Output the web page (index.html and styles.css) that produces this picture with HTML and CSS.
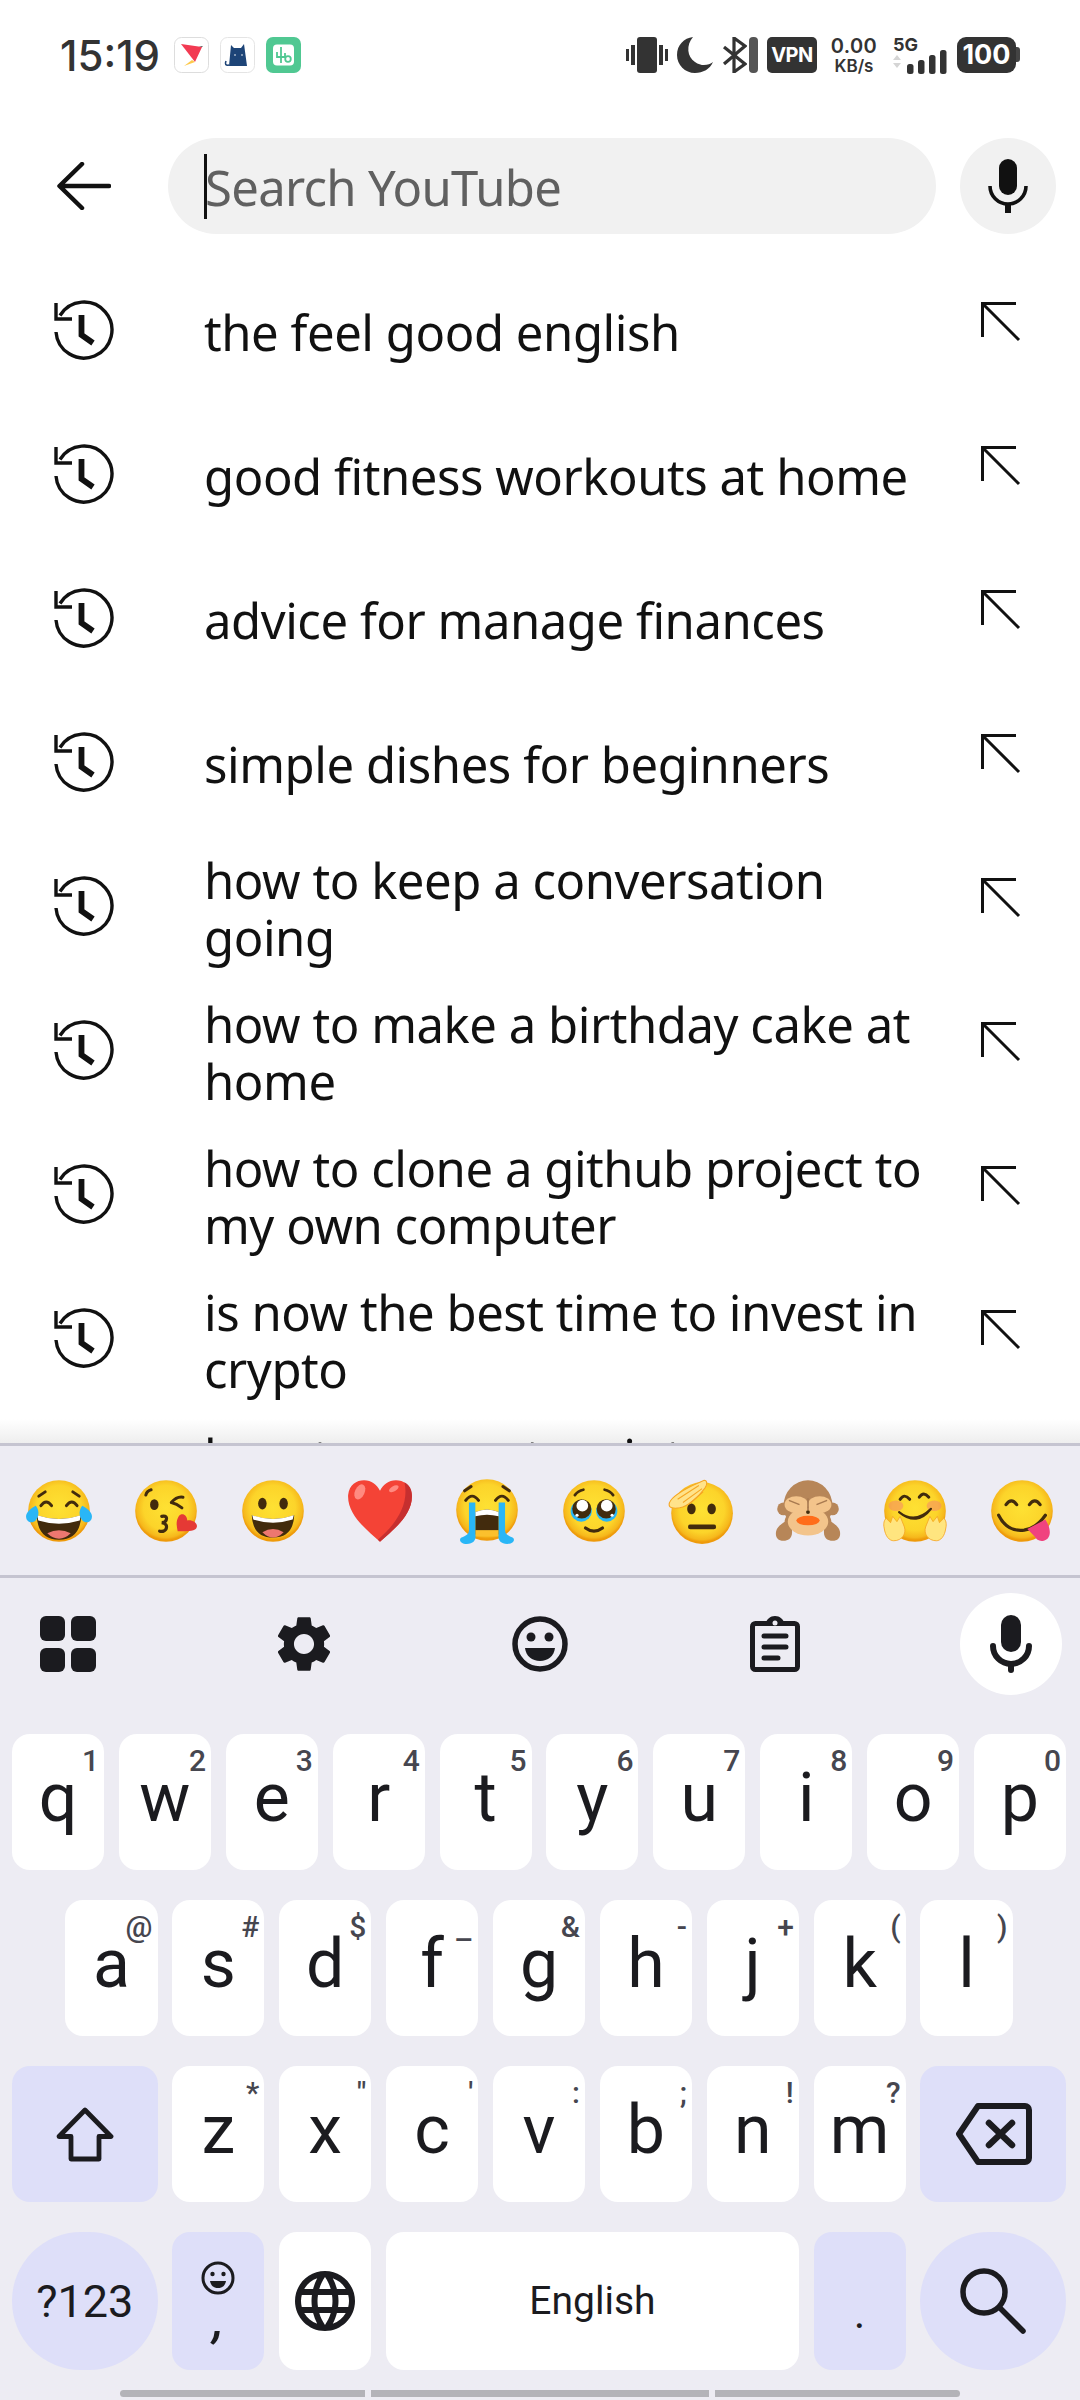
FILE: index.html
```html
<!DOCTYPE html>
<html lang="en">

<head>
    <meta charset="UTF-8">
    <meta name="viewport" content="width=device-width, initial-scale=1.0">
    <title>Search YouTube</title>
    <link rel="stylesheet" href="styles.css">
</head>

<body>

    <!-- shared icons -->
    <svg class="sprite" aria-hidden="true">
        <defs>
            <radialGradient id="face" cx="50%" cy="45%" r="52%">
                <stop offset="0%" stop-color="#fee133"/>
                <stop offset="70%" stop-color="#fcd42a"/>
                <stop offset="92%" stop-color="#f6b81c"/>
                <stop offset="100%" stop-color="#ee9a0a"/>
            </radialGradient>
            <symbol id="i-history" viewBox="0 0 60 60">
                <path d="M6 15.5A28 28 0 1 1 2 32" fill="none" stroke="#111" stroke-width="3.4"/>
                <path d="M2 3V19H18" fill="none" stroke="#111" stroke-width="3.4"/>
                <path d="M27.5 15V35L39 43" fill="none" stroke="#111" stroke-width="5.8"/>
            </symbol>
            <symbol id="i-fill" viewBox="0 0 40 40">
                <path d="M1.5 35V1.5H35M2 2L38 38" fill="none" stroke="#111" stroke-width="3"/>
            </symbol>
        </defs>
    </svg>

    <div class="page">

        <div class="status-bar">
            <div class="status-left">
                <span class="clock">15:19</span>
                <svg class="notif" viewBox="0 0 35 36">
                    <rect x=".5" y=".5" width="34" height="35" rx="7" fill="#fff" stroke="#ddd"/>
                    <path d="M7 7L28 10L21 25Z" fill="#f23a52"/>
                    <path d="M25 10L29 9L28 10Z" fill="#222"/>
                    <path d="M18 23L21 25L10 29Z" fill="#fdc94c"/>
                </svg>
                <svg class="notif" viewBox="0 0 35 36">
                    <rect x=".5" y=".5" width="34" height="35" rx="7" fill="#fff" stroke="#e4e4e4"/>
                    <path d="M11 8L14 11H21L24 7L27 29H9Z" fill="#1d4477"/>
                    <path d="M9 28Q4 29 6 24" fill="none" stroke="#1d4477" stroke-width="1.6"/>
                    <circle cx="15" cy="18" r=".8" fill="#fff"/>
                    <circle cx="22" cy="18" r=".8" fill="#fff"/>
                </svg>
                <svg class="notif" viewBox="0 0 35 36">
                    <rect width="35" height="36" rx="7" fill="#50c892"/>
                    <rect x="7" y="7.500" width="21" height="21" rx="4" fill="#fff"/>
                    <path d="M15 10V26M11 15V20H19V16" fill="none" stroke="#50c892" stroke-width="1.800"/>
                    <circle cx="22" cy="22" r="2.800" fill="none" stroke="#50c892" stroke-width="1.800"/>
                </svg>
            </div>
            <div class="status-right">
                <svg class="st-vibrate" viewBox="0 0 42 36" fill="#333">
                    <rect x="0" y="12" width="3" height="12"/>
                    <rect x="5" y="8" width="4" height="20"/>
                    <rect x="11" y="0" width="20" height="36" rx="3"/>
                    <rect x="33" y="8" width="4" height="20"/>
                    <rect x="39" y="12" width="3" height="12"/>
                </svg>
                <svg class="st-moon" viewBox="0 0 36 36">
                    <path d="M16 0C9 8 10 20 18 25C25 30 32 28 36 25C33 32 26 36 18 36C8 36 0 28 0 18C0 8 7 1 16 0Z" fill="#333"/>
                </svg>
                <svg class="st-bt" viewBox="0 0 25 36">
                    <path d="M2 10L23 27L12 35V1L23 9L2 27" fill="none" stroke="#333" stroke-width="3.200"/>
                </svg>
                <span class="st-bt-bar"></span>
                <span class="st-vpn">VPN</span>
                <div class="st-speed">
                    <span class="speed-num">0.00</span>
                    <span class="speed-unit">KB/s</span>
                </div>
                <div class="st-net">
                    <span class="net-type">5G</span>
                    <svg class="net-bars" viewBox="0 0 54 24">
                        <path d="M0 10L4 5L8 10ZM0 13H8L4 18Z" fill="#d5d5d5"/>
                        <rect x="14" y="14" width="6.500" height="10" rx="2.500" fill="#333"/>
                        <rect x="25" y="10" width="6.500" height="14" rx="2.500" fill="#333"/>
                        <rect x="36" y="5" width="6.500" height="19" rx="2.500" fill="#333"/>
                        <rect x="47" y="0" width="6.500" height="24" rx="2.500" fill="#333"/>
                    </svg>
                </div>
                <div class="st-battery"><span>100</span></div>
            </div>
        </div>

        <div class="search-head">
            <div class="back-col">
                <svg class="back-icon" viewBox="0 0 54 48">
                    <path d="M52 24H3M25 2L2.500 24L25 46" fill="none" stroke="#111" stroke-width="4.500" stroke-linecap="round" stroke-linejoin="round"/>
                </svg>
            </div>
            <div class="search-box">
                <span class="caret"></span>
                <span class="placeholder">Search YouTube</span>
            </div>
            <div class="voice-btn">
                <svg class="voice-icon" viewBox="0 0 40 54">
                    <rect x="11" y="0" width="18" height="36" rx="9" fill="#111"/>
                    <path d="M2 27a18 18 0 0 0 36 0" fill="none" stroke="#111" stroke-width="3.600"/>
                    <rect x="17" y="44" width="6" height="10" fill="#111"/>
                </svg>
            </div>
        </div>

        <div class="results">
            <div class="result">
                <svg class="hist-icon"><use href="#i-history"/></svg>
                <span class="result-text">the feel good english</span>
                <svg class="fill-icon"><use href="#i-fill"/></svg>
            </div>
            <div class="result">
                <svg class="hist-icon"><use href="#i-history"/></svg>
                <span class="result-text">good fitness workouts at home</span>
                <svg class="fill-icon"><use href="#i-fill"/></svg>
            </div>
            <div class="result">
                <svg class="hist-icon"><use href="#i-history"/></svg>
                <span class="result-text">advice for manage finances</span>
                <svg class="fill-icon"><use href="#i-fill"/></svg>
            </div>
            <div class="result">
                <svg class="hist-icon"><use href="#i-history"/></svg>
                <span class="result-text">simple dishes for beginners</span>
                <svg class="fill-icon"><use href="#i-fill"/></svg>
            </div>
            <div class="result">
                <svg class="hist-icon"><use href="#i-history"/></svg>
                <span class="result-text">how to keep a conversation going</span>
                <svg class="fill-icon"><use href="#i-fill"/></svg>
            </div>
            <div class="result">
                <svg class="hist-icon"><use href="#i-history"/></svg>
                <span class="result-text">how to make a birthday cake at home</span>
                <svg class="fill-icon"><use href="#i-fill"/></svg>
            </div>
            <div class="result">
                <svg class="hist-icon"><use href="#i-history"/></svg>
                <span class="result-text">how to clone a github project to my own computer</span>
                <svg class="fill-icon"><use href="#i-fill"/></svg>
            </div>
            <div class="result">
                <svg class="hist-icon"><use href="#i-history"/></svg>
                <span class="result-text">is now the best time to invest in crypto</span>
                <svg class="fill-icon"><use href="#i-fill"/></svg>
            </div>
            <div class="result">
                <svg class="hist-icon"><use href="#i-history"/></svg>
                <span class="result-text">how to convert a pint measurement</span>
                <svg class="fill-icon"><use href="#i-fill"/></svg>
            </div>
        </div>

        <div class="keyboard">

            <div class="emoji-strip">
                <div class="emoji-cell">
                    <svg class="emoji" viewBox="0 0 64 64">
                        <circle cx="32" cy="32" r="29" fill="url(#face)"/>
                        <path d="M15 27q5-7 10 0M39 27q5-7 10 0M13 18l6-4M51 18l-6-4" fill="none" stroke="#422b0d" stroke-width="2.800" stroke-linecap="round"/>
                        <path d="M11 36q21 7 42 0q-1 23-21 23T11 36Z" fill="#422b0d"/>
                        <path d="M11.500 36q20.500 7 41 0l-1 5q-19.500 6-39 0Z" fill="#fff"/>
                        <path d="M21 53q11-6 22 0q-5 5-11 5t-11-5Z" fill="#ed7770"/>
                        <path d="M10 27C13 30 14 36 10 41C7 44 1 43 1 37C1 33 6 29 10 27Z" fill="#29b6f6"/>
                        <path d="M54 27C51 30 50 36 54 41C57 44 63 43 63 37C63 33 58 29 54 27Z" fill="#29b6f6"/>
                    </svg>
                </div>
                <div class="emoji-cell">
                    <svg class="emoji" viewBox="0 0 64 64">
                        <circle cx="32" cy="32" r="29" fill="url(#face)"/>
                        <ellipse cx="21" cy="26" rx="4" ry="5" fill="#422b0d"/>
                        <path d="M13 17q1-4 5-5M37 24q5-6 11-5M37 24q5 1 10 5" fill="none" stroke="#422b0d" stroke-width="2.800" stroke-linecap="round"/>
                        <path d="M28 37q6-1 4 4q-1 2-4 2q6 1 4 6q-2 3-6 2" fill="none" stroke="#422b0d" stroke-width="3" stroke-linecap="round"/>
                        <path d="M43 51C42 46 41 42 44 37C47 33 52 36 52 41C56 40 62 43 61 47C60 51 54 51 43 51Z" fill="#e53935"/>
                    </svg>
                </div>
                <div class="emoji-cell">
                    <svg class="emoji" viewBox="0 0 64 64">
                        <circle cx="32" cy="32" r="29" fill="url(#face)"/>
                        <ellipse cx="22" cy="25" rx="4" ry="5.500" fill="#422b0d"/>
                        <ellipse cx="42" cy="25" rx="4" ry="5.500" fill="#422b0d"/>
                        <path d="M12 36q20 7 40 0q-1 21-20 21T12 36Z" fill="#422b0d"/>
                        <path d="M12.500 36q19.500 7 39 0l-1 4q-18.500 6-37 0Z" fill="#fff"/>
                        <path d="M22 52q10-6 20 0q-5 5-10 5t-10-5Z" fill="#ed7770"/>
                    </svg>
                </div>
                <div class="emoji-cell">
                    <svg class="emoji" viewBox="0 0 64 64">
                        <path d="M32 61C20 50 1 36 2 17C3 7 10 3 17 3C24 3 29 7 32 13C35 7 40 3 47 3C54 3 61 7 62 17C63 36 44 50 32 61Z" fill="#f44336"/>
                        <path d="M55 5C60 8 62 12 62 17C63 36 44 50 32 61L30 59C45 46 60 28 55 5Z" fill="#c62f2f"/>
                        <ellipse cx="13" cy="14" rx="4.500" ry="7.500" transform="rotate(25 13 14)" fill="#ff8a80"/>
                        <ellipse cx="45" cy="11" rx="5" ry="2.500" transform="rotate(-30 45 11)" fill="#ff8a80"/>
                    </svg>
                </div>
                <div class="emoji-cell">
                    <svg class="emoji" viewBox="0 0 64 64">
                        <circle cx="32" cy="31" r="29" fill="url(#face)"/>
                        <path d="M12 22q6-8 12 0M40 22q6-8 12 0M11 13l6-4M53 13l-6-4" fill="none" stroke="#422b0d" stroke-width="2.800" stroke-linecap="round"/>
                        <path d="M21 33q11-5 22 0V54H21Z" fill="#422b0d"/>
                        <path d="M21 33q11-5 22 0v4q-11-3-22 0Z" fill="#fff"/>
                        <path d="M21 50H43V56H21Z" fill="#fbc02d"/>
                        <path d="M15 24H21V54C22 58 20 63 13 63C7 63 5 59 8 57C12 55 15 54 15 50Z" fill="#29b6f6"/>
                        <path d="M49 24H43V54C42 58 44 63 51 63C57 63 59 59 56 57C52 55 49 54 49 50Z" fill="#29b6f6"/>
                    </svg>
                </div>
                <div class="emoji-cell">
                    <svg class="emoji" viewBox="0 0 64 64">
                        <circle cx="32" cy="32" r="29" fill="url(#face)"/>
                        <path d="M14 17q3-4 8-5M50 17q-3-4-8-5" fill="none" stroke="#422b0d" stroke-width="2.600" stroke-linecap="round"/>
                        <circle cx="20" cy="32" r="10" fill="#29b6f6"/>
                        <circle cx="44" cy="32" r="10" fill="#29b6f6"/>
                        <circle cx="20.500" cy="30" r="9" fill="#422b0d"/>
                        <circle cx="43.500" cy="30" r="9" fill="#422b0d"/>
                        <circle cx="21" cy="27" r="5.500" fill="#fff"/>
                        <circle cx="44" cy="27" r="5.500" fill="#fff"/>
                        <circle cx="16" cy="36" r="1.500" fill="#fff"/>
                        <circle cx="49" cy="36" r="1.500" fill="#fff"/>
                        <path d="M24 48q8 6 16 0" fill="none" stroke="#422b0d" stroke-width="3" stroke-linecap="round"/>
                    </svg>
                </div>
                <div class="emoji-cell">
                    <svg class="emoji" viewBox="0 0 64 64">
                        <circle cx="33" cy="34" r="29" fill="url(#face)"/>
                        <ellipse cx="23" cy="30" rx="4" ry="5" fill="#422b0d"/>
                        <ellipse cx="42" cy="30" rx="4" ry="5" fill="#422b0d"/>
                        <path d="M22 47H44" stroke="#422b0d" stroke-width="4.500" stroke-linecap="round"/>
                        <path d="M2 26C2 20 12 14 24 8L35 3C38 3 38 7 36 10C30 18 22 27 12 29C6 30 2 29 2 26Z" fill="#ffe38a" stroke="#f6a623" stroke-width="1"/>
                        <path d="M10 21L30 8M15 24L33 11M21 25L34 14" stroke="#f6a623" stroke-width="1" fill="none"/>
                    </svg>
                </div>
                <div class="emoji-cell">
                    <svg class="emoji" viewBox="0 0 64 64">
                        <circle cx="9" cy="30" r="6" fill="#b78658"/>
                        <circle cx="55" cy="30" r="6" fill="#b78658"/>
                        <ellipse cx="32" cy="27" rx="23" ry="24" fill="#b78658"/>
                        <path d="M10 42C10 38 13 34 17 34V52C17 58 13 60 9 60C3 60 1 56 2 51C3 47 7 44 10 42Z" fill="#b78658"/>
                        <path d="M54 42C54 38 51 34 47 34V52C47 58 51 60 55 60C61 60 63 56 62 51C61 47 57 44 54 42Z" fill="#b78658"/>
                        <ellipse cx="32" cy="42" rx="19" ry="13" fill="#f3c48b"/>
                        <ellipse cx="32" cy="41" rx="11" ry="4.500" fill="#ff6d1a"/>
                        <ellipse cx="21" cy="26" rx="11" ry="8" fill="#f3c48b"/>
                        <ellipse cx="43" cy="26" rx="11" ry="8" fill="#f3c48b"/>
                        <path d="M14 22l10 4M50 22l-10 4M32 20V31" stroke="#a87a50" stroke-width="1.500" fill="none"/>
                        <circle cx="32" cy="33" r="1.800" fill="#422b0d"/>
                    </svg>
                </div>
                <div class="emoji-cell">
                    <svg class="emoji" viewBox="0 0 64 64">
                        <circle cx="32" cy="32" r="29" fill="url(#face)"/>
                        <ellipse cx="14" cy="27" rx="7" ry="5" fill="#f48a6a" opacity=".55"/>
                        <ellipse cx="50" cy="27" rx="7" ry="5" fill="#f48a6a" opacity=".55"/>
                        <path d="M18 21q4-6 9 0M36 19q4-6 9 0" fill="none" stroke="#422b0d" stroke-width="2.800" stroke-linecap="round"/>
                        <path d="M17 33q15 12 30-3q-13 17-30 3Z" fill="#422b0d" stroke="#422b0d" stroke-width="2" stroke-linejoin="round"/>
                        <path d="M3 48C2 44 3 40 5 39L9 43L11 37L15 42L18 37L22 47C24 53 20 60 12 60C8 60 4 56 3 48Z" fill="#ffe57f" stroke="#f6a623" stroke-width=".8"/>
                        <path d="M61 48C62 44 61 40 59 39L55 43L53 37L49 42L46 37L42 47C40 53 44 60 52 60C56 60 60 56 61 48Z" fill="#ffe57f" stroke="#f6a623" stroke-width=".8"/>
                    </svg>
                </div>
                <div class="emoji-cell">
                    <svg class="emoji" viewBox="0 0 64 64">
                        <circle cx="32" cy="32" r="29" fill="url(#face)"/>
                        <path d="M17 26q5-7 10 0M39 26q5-7 10 0" fill="none" stroke="#422b0d" stroke-width="3" stroke-linecap="round"/>
                        <path d="M10 36Q18 52 34 50Q46 48 54 36" fill="none" stroke="#422b0d" stroke-width="3" stroke-linecap="round"/>
                        <path d="M37 49L54 40C58 46 60 54 56 58C51 62 46 60 44 56Z" fill="#f0437f"/>
                    </svg>
                </div>
            </div>

            <div class="kb-tools">
                <div class="tool">
                    <svg class="tool-apps" viewBox="0 0 56 56" fill="#1b1b1f">
                        <rect width="25" height="25" rx="6"/>
                        <rect x="31" width="25" height="25" rx="6"/>
                        <rect y="32" width="25" height="24" rx="6"/>
                        <rect x="31" y="32" width="25" height="24" rx="6"/>
                    </svg>
                </div>
                <div class="tool">
                    <svg class="tool-gear" viewBox="2.700 2 18.600 20">
                        <path fill="#1b1b1f" d="M19.140 12.940c.04-.3.06-.61.06-.94 0-.32-.02-.64-.07-.94l2.030-1.580c.18-.14.23-.41.12-.61l-1.920-3.320c-.12-.22-.37-.29-.59-.22l-2.390.96c-.5-.38-1.030-.7-1.620-.94l-.36-2.540c-.04-.24-.24-.41-.48-.41h-3.840c-.24 0-.43.17-.47.41l-.36 2.540c-.59.24-1.130.57-1.620.94l-2.390-.96c-.22-.08-.47 0-.59.22L2.740 8.870c-.12.21-.08.47.12.61l2.030 1.580c-.05.3-.09.63-.09.94s.02.64.07.94l-2.030 1.580c-.18.14-.23.41-.12.61l1.920 3.320c.12.22.37.29.59.22l2.390-.96c.5.38 1.030.7 1.620.94l.36 2.540c.05.24.24.41.48.41h3.840c.24 0 .44-.17.47-.41l.36-2.540c.59-.24 1.130-.56 1.620-.94l2.390.96c.22.08.47 0 .59-.22l1.920-3.320c.12-.22.07-.47-.12-.61l-2.010-1.580zM12 15.600c-1.980 0-3.600-1.620-3.600-3.600s1.620-3.600 3.600-3.600 3.600 1.620 3.600 3.600-1.620 3.600-3.600 3.600z"/>
                    </svg>
                </div>
                <div class="tool">
                    <svg class="tool-smile" viewBox="0 0 56 56">
                        <circle cx="28" cy="28" r="25" fill="none" stroke="#1b1b1f" stroke-width="5.500"/>
                        <circle cx="19" cy="21" r="4.500" fill="#1b1b1f"/>
                        <circle cx="37" cy="21" r="4.500" fill="#1b1b1f"/>
                        <path d="M13 32H43C42 40 36 45 28 45C20 45 14 40 13 32Z" fill="#1b1b1f"/>
                    </svg>
                </div>
                <div class="tool">
                    <svg class="tool-clip" viewBox="0 0 50 56">
                        <rect x="2.500" y="7.500" width="45" height="46" rx="3" fill="none" stroke="#1b1b1f" stroke-width="5"/>
                        <path d="M15 8C17 3 20 0 25 0C30 0 33 3 35 8Z" fill="#1b1b1f"/>
                        <circle cx="25" cy="7" r="2.500" fill="#edecf3"/>
                        <path d="M14 20H36M14 31H36M14 42H28" stroke="#1b1b1f" stroke-width="5" stroke-linecap="round"/>
                    </svg>
                </div>
                <div class="tool tool-voice">
                    <svg class="tool-mic" viewBox="0 0 42 58">
                        <rect x="11" y="0" width="20" height="37" rx="10" fill="#1b1b1f"/>
                        <path d="M3 31a18 18 0 0 0 36 0" fill="none" stroke="#1b1b1f" stroke-width="6" stroke-linecap="round"/>
                        <path d="M21 49V55" stroke="#1b1b1f" stroke-width="6" stroke-linecap="round"/>
                    </svg>
                </div>
            </div>

            <div class="keys">
                <div class="key">q<span class="hint">1</span></div>
                <div class="key">w<span class="hint">2</span></div>
                <div class="key">e<span class="hint">3</span></div>
                <div class="key">r<span class="hint">4</span></div>
                <div class="key">t<span class="hint">5</span></div>
                <div class="key">y<span class="hint">6</span></div>
                <div class="key">u<span class="hint">7</span></div>
                <div class="key">i<span class="hint">8</span></div>
                <div class="key">o<span class="hint">9</span></div>
                <div class="key">p<span class="hint">0</span></div>

                <div class="key first-a">a<span class="hint">@</span></div>
                <div class="key">s<span class="hint">#</span></div>
                <div class="key">d<span class="hint">$</span></div>
                <div class="key">f<span class="hint hint-low">&#8211;</span></div>
                <div class="key">g<span class="hint">&amp;</span></div>
                <div class="key">h<span class="hint">-</span></div>
                <div class="key">j<span class="hint">+</span></div>
                <div class="key">k<span class="hint">(</span></div>
                <div class="key">l<span class="hint">)</span></div>

                <div class="key key-fn wide">
                    <svg class="shift-icon" viewBox="0 0 58 55">
                        <path d="M29 3L55 29.500H43V52H15V29.500H3Z" fill="none" stroke="#1b1b1f" stroke-width="4.800" stroke-linejoin="round"/>
                    </svg>
                </div>
                <div class="key">z<span class="hint">*</span></div>
                <div class="key">x<span class="hint">"</span></div>
                <div class="key">c<span class="hint">'</span></div>
                <div class="key">v<span class="hint">:</span></div>
                <div class="key">b<span class="hint">;</span></div>
                <div class="key">n<span class="hint">!</span></div>
                <div class="key">m<span class="hint">?</span></div>
                <div class="key key-fn wide">
                    <svg class="del-icon" viewBox="0 0 77 62">
                        <path d="M23 3H70a4 4 0 0 1 4 4V55a4 4 0 0 1-4 4H23L4 31Z" fill="none" stroke="#1b1b1f" stroke-width="6" stroke-linejoin="round"/>
                        <path d="M34 20L57 42M57 20L34 42" stroke="#1b1b1f" stroke-width="6.500" stroke-linecap="round"/>
                    </svg>
                </div>

                <div class="key key-fn wide round key-sym">?123</div>
                <div class="key key-fn key-comma">
                    <svg class="comma-smile" viewBox="0 0 34 34">
                        <circle cx="17" cy="17" r="15" fill="none" stroke="#1b1b1f" stroke-width="3"/>
                        <circle cx="11.500" cy="13" r="2.200" fill="#1b1b1f"/>
                        <circle cx="22.500" cy="13" r="2.200" fill="#1b1b1f"/>
                        <path d="M9 20H25C24 25 21 27 17 27C13 27 10 25 9 20Z" fill="#1b1b1f"/>
                    </svg>
                    <span class="comma">,</span>
                </div>
                <div class="key key-plain">
                    <svg class="globe-icon" viewBox="2 2 20 20">
                        <path fill="#1b1b1f" d="M11.990 2C6.470 2 2 6.480 2 12s4.470 10 9.990 10C17.520 22 22 17.520 22 12S17.520 2 11.990 2zm6.930 6h-2.950c-.32-1.250-.78-2.450-1.380-3.560 1.840.63 3.370 1.910 4.330 3.560zM12 4.040c.83 1.200 1.480 2.530 1.910 3.960h-3.820c.43-1.430 1.080-2.760 1.910-3.960zM4.260 14C4.100 13.360 4 12.690 4 12s.1-1.360.26-2h3.380c-.08.66-.14 1.320-.14 2 0 .68.06 1.340.14 2H4.260zm.82 2h2.950c.32 1.250.78 2.450 1.380 3.560-1.840-.63-3.370-1.900-4.330-3.560zm2.950-8H5.080c.96-1.660 2.490-2.930 4.330-3.560C8.810 5.550 8.350 6.750 8.030 8zM12 19.960c-.83-1.200-1.480-2.530-1.910-3.960h3.820c-.43 1.430-1.080 2.760-1.910 3.960zM14.340 14H9.660c-.09-.66-.16-1.320-.16-2 0-.68.07-1.350.16-2h4.680c.09.65.16 1.320.16 2 0 .68-.07 1.340-.16 2zm.25 5.560c.6-1.110 1.060-2.310 1.380-3.560h2.950c-.96 1.650-2.490 2.930-4.330 3.560zM16.360 14c.08-.66.14-1.320.14-2 0-.68-.06-1.340-.14-2h3.380c.16.64.26 1.310.26 2s-.1 1.360-.26 2h-3.380z"/>
                    </svg>
                </div>
                <div class="key key-plain key-space">English</div>
                <div class="key key-fn key-period">.</div>
                <div class="key key-fn wide round">
                    <svg class="search-icon" viewBox="0 0 66 66">
                        <circle cx="24" cy="24" r="21" fill="none" stroke="#1b1b1f" stroke-width="5.500"/>
                        <path d="M40 40L63 63" stroke="#1b1b1f" stroke-width="5.500" stroke-linecap="round"/>
                    </svg>
                </div>
            </div>

            <div class="gesture-bar">
                <span class="gesture-seg seg-left"></span>
                <span class="gesture-seg seg-mid"></span>
                <span class="gesture-seg seg-right"></span>
            </div>
        </div>

    </div>

</body>

</html>
```

FILE: styles.css
```css
html,
body {
    margin: 0;
    padding: 0;
    background: #fff;
}

body {
    width: 1080px;
    height: 2400px;
    overflow: hidden;
    font-family: 'Noto Sans', 'Open Sans', sans-serif;
    color: #111;
}

svg {
    display: block;
    flex-shrink: 0;
}

.sprite {
    position: absolute;
    width: 0;
    height: 0;
}

.page {
    display: flex;
    flex-direction: column;
    height: 2400px;
}

/* Status bar */

.status-bar {
    height: 110px;
    flex-shrink: 0;
    padding: 0 60px;
    box-sizing: border-box;
    display: flex;
    align-items: center;
    justify-content: space-between;
    color: #333;
}

.status-left {
    display: flex;
    align-items: center;
}

.clock {
    width: 114px;
    font-family: 'Inter', sans-serif;
    font-size: 42px;
    font-weight: 500;
}

.notif {
    width: 35px;
    height: 36px;
    margin-right: 11px;
}

.status-right {
    display: flex;
    align-items: center;
    font-family: 'Inter', sans-serif;
    font-weight: 700;
}

.st-vibrate {
    width: 42px;
    height: 36px;
    margin-right: 9px;
}

.st-moon {
    width: 36px;
    height: 36px;
    margin-right: 9px;
}

.st-bt {
    width: 25px;
    height: 36px;
    margin-right: 2px;
}

.st-bt-bar {
    width: 9px;
    height: 36px;
    border-radius: 4px;
    background: #555;
    margin-right: 9px;
}

.st-vpn {
    width: 50px;
    height: 36px;
    border-radius: 5px;
    background: #333;
    color: #fff;
    font-size: 20px;
    line-height: 36px;
    text-align: center;
    letter-spacing: -0.5px;
    margin-right: 13px;
}

.st-speed {
    width: 48px;
    display: flex;
    flex-direction: column;
    align-items: center;
    margin-right: 15px;
}

.speed-num {
    font-size: 20px;
    line-height: 21px;
    letter-spacing: 0.4px;
    font-weight: 600;
}

.speed-unit {
    font-size: 17px;
    line-height: 18px;
    font-weight: 600;
}

.st-net {
    width: 54px;
    height: 38px;
    display: flex;
    flex-direction: column;
    margin-right: 10px;
    font-size: 18px;
    line-height: 17px;
}

.net-bars {
    width: 54px;
    height: 24px;
    margin-top: -3px;
}

.st-battery {
    width: 59px;
    height: 36px;
    border-radius: 9px;
    background: #333;
    color: #fff;
    font-size: 27px;
    line-height: 36px;
    text-align: center;
    margin-right: 4px;
    position: relative;
}

.st-battery::after {
    content: '';
    position: absolute;
    top: 10px;
    right: -4px;
    width: 4px;
    height: 15px;
    border-radius: 0 3px 3px 0;
    background: #444;
}

/* Search row */

.search-head {
    flex-shrink: 0;
    display: flex;
    align-items: center;
    padding: 28px 24px 24px 0;
}

.back-col {
    width: 168px;
    display: flex;
    justify-content: center;
}

.back-icon {
    width: 54px;
    height: 48px;
}

.search-box {
    width: 768px;
    height: 96px;
    box-sizing: border-box;
    padding-left: 36px;
    border-radius: 48px;
    background: #f1f1f1;
    display: flex;
    align-items: center;
}

.caret {
    width: 3px;
    height: 65px;
    margin-right: -2px;
    background: #111;
}

.placeholder {
    padding-top: 2px;
    font-size: 49px;
    letter-spacing: -0.7px;
    color: #606060;
}

.voice-btn {
    width: 96px;
    height: 96px;
    margin-left: 24px;
    border-radius: 50%;
    background: #f1f1f1;
    display: flex;
    align-items: center;
    justify-content: center;
}

.voice-icon {
    width: 40px;
    height: 54px;
}

/* Suggestion rows */

.results {
    flex: 1;
    min-height: 0;
    overflow: hidden;
    background: linear-gradient(rgba(238, 238, 238, 0), #eee) no-repeat bottom / 100% 24px;
}

.result {
    height: 144px;
    display: flex;
    align-items: center;
}

.hist-icon {
    width: 60px;
    height: 60px;
    margin: 0 90px 0 54px;
}

.result-text {
    width: 740px;
    font-size: 49px;
    letter-spacing: -0.45px;
    line-height: 57.5px;
    color: #111;
    padding-top: 6px;
}

.fill-icon {
    width: 40px;
    height: 40px;
    margin: 0 0 16px 37px;
}

/* Keyboard */

.keyboard {
    flex-shrink: 0;
    height: 957px;
    box-sizing: border-box;
    border-top: 3px solid #c5c4d0;
    background: #edecf3;
    font-family: 'Roboto', sans-serif;
    color: #1b1b1f;
}

.emoji-strip {
    height: 129px;
    padding: 0 5px;
    box-sizing: border-box;
    display: flex;
}

.emoji-cell {
    flex: 1;
    display: flex;
    align-items: center;
    justify-content: center;
}

.emoji {
    width: 68px;
    height: 68px;
}

.kb-tools {
    height: 122px;
    box-sizing: border-box;
    padding: 15px 18px 0 17px;
    border-top: 3px solid #c5c4d0;
    display: flex;
    justify-content: space-between;
}

.tool {
    width: 102px;
    height: 102px;
    display: flex;
    align-items: center;
    justify-content: center;
}

.tool-voice {
    border-radius: 50%;
    background: #fff;
}

.tool-apps {
    width: 56px;
    height: 56px;
}

.tool-gear {
    width: 52px;
    height: 56px;
}

.tool-smile {
    width: 56px;
    height: 56px;
}

.tool-clip {
    width: 50px;
    height: 56px;
}

.tool-mic {
    width: 42px;
    height: 58px;
}

.keys {
    padding: 37px 14px 0 12px;
    display: grid;
    grid-template-columns: repeat(20, 1fr);
    grid-template-rows: repeat(3, 136px) 138px;
    column-gap: 14.800px;
    row-gap: 30px;
}

.key {
    grid-column: span 2;
    position: relative;
    box-sizing: border-box;
    padding-bottom: 8px;
    border-radius: 18px;
    background: #fff;
    display: flex;
    align-items: center;
    justify-content: center;
    font-size: 68px;
    line-height: 1;
}

.first-a {
    grid-column: 2 / span 2;
}

.key-fn,
.key-plain {
    padding-bottom: 0;
}

.key-fn {
    background: #dedff9;
}

.wide {
    grid-column: span 3;
}

.round {
    border-radius: 69px;
}

.hint {
    position: absolute;
    top: 9px;
    right: 5px;
    font-size: 30px;
    font-weight: 500;
    line-height: 36px;
    color: #46464f;
}

.hint-low {
    top: 22px;
}

.key-sym {
    font-size: 45px;
}

.key-comma {
    flex-direction: column;
}

.comma-smile {
    width: 34px;
    height: 34px;
}

.comma {
    font-size: 50px;
    font-weight: 500;
    line-height: 50px;
    font-style: italic;
    margin-bottom: -4px;
}

.key-space {
    grid-column: span 8;
    font-size: 39px;
}

.key-period {
    font-size: 44px;
    align-items: flex-end;
    padding-bottom: 35px;
}

.shift-icon {
    width: 58px;
    height: 55px;
}

.del-icon {
    width: 77px;
    height: 62px;
}

.globe-icon {
    width: 60px;
    height: 60px;
}

.search-icon {
    width: 66px;
    height: 66px;
}

.gesture-bar {
    margin-top: 20px;
    padding-left: 120px;
    display: flex;
    gap: 6px;
}

.gesture-seg {
    width: 245px;
    height: 7px;
    background: #b3b3b8;
}

.seg-left {
    border-radius: 4px 0 0 4px;
}

.seg-mid {
    width: 338px;
}

.seg-right {
    border-radius: 0 4px 4px 0;
}
```
